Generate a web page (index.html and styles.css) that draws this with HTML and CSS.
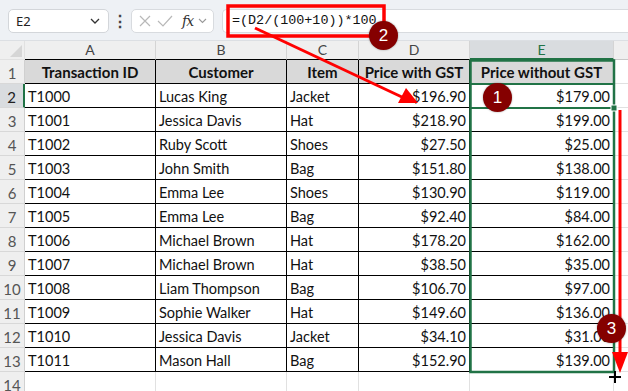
FILE: index.html
```html
<!DOCTYPE html>
<html>
<head>
<meta charset="utf-8">
<link rel="stylesheet" href="styles.css">
</head>
<body>
<div class="page">
  <div class="toolbar">
    <div class="namebox"><span class="nb-text">E2</span>
      <svg class="chev" width="10" height="6" viewBox="0 0 10 6"><path d="M1 1 L5 5 L9 1" fill="none" stroke="#333" stroke-width="1.3"/></svg>
    </div>
    <div class="dots">⋮</div>
    <div class="fxbox">
      <svg width="14" height="14" viewBox="0 0 14 14"><path d="M2 2 L12 12 M12 2 L2 12" stroke="#b8b8b8" stroke-width="1.2" fill="none"/></svg>
      <svg width="16" height="14" viewBox="0 0 16 14"><path d="M1 7 L6 12 L15 2" stroke="#b8b8b8" stroke-width="1.2" fill="none"/></svg>
      <span class="fx">fx</span>
      <svg width="9" height="6" viewBox="0 0 9 6"><path d="M1 1 L4.5 4.5 L8 1" fill="none" stroke="#999" stroke-width="1.1"/></svg>
    </div>
    <div class="formula">=(D2/(100+10))*100</div>
  </div>
  <div class="sheet">
    <div class="corner"><svg width="14" height="14" viewBox="0 0 14 14"><path d="M14 2 L14 14 L2 14 Z" fill="#d6d6d6"/></svg></div>
    <div class="ch">A</div><div class="ch">B</div><div class="ch">C</div><div class="ch">D</div><div class="ch sel">E</div><div class="ch blank"></div>

    <div class="rh">1</div><div class="hd">Transaction ID</div><div class="hd">Customer</div><div class="hd">Item</div><div class="hd">Price with GST</div><div class="hd">Price without GST</div><div class="ec"></div>

    <div class="rh act">2</div><div class="c">T1000</div><div class="c">Lucas King</div><div class="c">Jacket</div><div class="c n">$196.90</div><div class="c n">$179.00</div><div class="ec"></div>
    <div class="rh">3</div><div class="c">T1001</div><div class="c">Jessica Davis</div><div class="c">Hat</div><div class="c n">$218.90</div><div class="c n">$199.00</div><div class="ec"></div>
    <div class="rh">4</div><div class="c">T1002</div><div class="c">Ruby Scott</div><div class="c">Shoes</div><div class="c n">$27.50</div><div class="c n">$25.00</div><div class="ec"></div>
    <div class="rh">5</div><div class="c">T1003</div><div class="c">John Smith</div><div class="c">Bag</div><div class="c n">$151.80</div><div class="c n">$138.00</div><div class="ec"></div>
    <div class="rh">6</div><div class="c">T1004</div><div class="c">Emma Lee</div><div class="c">Shoes</div><div class="c n">$130.90</div><div class="c n">$119.00</div><div class="ec"></div>
    <div class="rh">7</div><div class="c">T1005</div><div class="c">Emma Lee</div><div class="c">Bag</div><div class="c n">$92.40</div><div class="c n">$84.00</div><div class="ec"></div>
    <div class="rh">8</div><div class="c">T1006</div><div class="c">Michael Brown</div><div class="c">Hat</div><div class="c n">$178.20</div><div class="c n">$162.00</div><div class="ec"></div>
    <div class="rh">9</div><div class="c">T1007</div><div class="c">Michael Brown</div><div class="c">Hat</div><div class="c n">$38.50</div><div class="c n">$35.00</div><div class="ec"></div>
    <div class="rh">10</div><div class="c">T1008</div><div class="c">Liam Thompson</div><div class="c">Bag</div><div class="c n">$106.70</div><div class="c n">$97.00</div><div class="ec"></div>
    <div class="rh">11</div><div class="c">T1009</div><div class="c">Sophie Walker</div><div class="c">Hat</div><div class="c n">$149.60</div><div class="c n">$136.00</div><div class="ec"></div>
    <div class="rh">12</div><div class="c">T1010</div><div class="c">Jessica Davis</div><div class="c">Jacket</div><div class="c n">$34.10</div><div class="c n">$31.00</div><div class="ec"></div>
    <div class="rh">13</div><div class="c">T1011</div><div class="c">Mason Hall</div><div class="c">Bag</div><div class="c n">$152.90</div><div class="c n">$139.00</div><div class="ec"></div>
    <div class="rh">14</div><div class="e"></div><div class="e"></div><div class="e"></div><div class="e"></div><div class="e"></div><div class="ec"></div>
  </div>

  <svg class="overlay" width="628" height="391" viewBox="0 0 628 391">
    <rect x="228" y="6" width="156" height="30" fill="none" stroke="#ff0000" stroke-width="3.5"/>
    <rect x="470.5" y="60.5" width="143.5" height="311.5" fill="none" stroke="#217346" stroke-width="2.5"/>
    <line x1="470" y1="84" x2="614" y2="84" stroke="#217346" stroke-width="2"/>
    <line x1="470" y1="108" x2="614" y2="108" stroke="#217346" stroke-width="2"/>
    <rect x="611" y="105" width="6" height="6" fill="#217346" stroke="#fff" stroke-width="1"/>
    <line x1="255" y1="28" x2="404" y2="98" stroke="#ff0000" stroke-width="3"/>
    <path d="M418 103 L398 103 L406 88 Z" fill="#ff0000"/>
    <line x1="620" y1="110" x2="620" y2="356" stroke="#ff0000" stroke-width="3"/>
    <path d="M612 352 L628 352 L620 373 Z" fill="#ff0000"/>
    <path d="M609 377 L621 377 M615 371 L615 383" stroke="#000" stroke-width="2"/>
  </svg>
  <div class="badge b1">1</div>
  <div class="badge b2">2</div>
  <div class="badge b3">3</div>
</div>
</body>
</html>
```

FILE: styles.css
```css
* { box-sizing: border-box; }
html, body { margin: 0; padding: 0; background: #fff; }
.page { position: relative; width: 628px; height: 391px; overflow: hidden; font-family: Lato, "Liberation Sans", sans-serif; }
.toolbar { height: 41px; background: #eef1f5; display: flex; align-items: flex-start; padding-top: 9px; padding-left: 8px; border-bottom: 1px solid #dcdfe3; }
.namebox { width: 101px; height: 24px; background: #fff; border: 1px solid #d3d6da; border-radius: 5px; display: flex; align-items: center; justify-content: space-between; padding: 0 8px 0 7px; font-family: "Noto Sans", sans-serif; font-size: 13px; color: #222; }
.dots { width: 22px; text-align: center; font-size: 16px; line-height: 24px; color: #444; font-weight: bold; }
.fxbox { width: 83px; height: 24px; background: #fff; border: 1px solid #d8dbdf; border-radius: 5px; display: flex; align-items: center; gap: 5px; padding-left: 6px; }
.fx { font-family: "DejaVu Serif", serif; font-style: italic; font-size: 14px; color: #333; margin-left: 4px; letter-spacing: -1px; }
.formula { margin-left: 8px; flex: 1; height: 24px; background: #fff; border: 1px solid #d8dbdf; border-right: none; border-radius: 5px 0 0 5px; font-family: "Liberation Mono", monospace; font-size: 13.4px; line-height: 22px; padding-left: 9px; color: #111; }
.sheet { display: grid; grid-template-columns: 25px 131px 131px 72px 111px 144px 14px; grid-template-rows: 19px repeat(14, 24px); }
.sheet > div { border-right: 1px solid #e1e1e1; border-bottom: 1px solid #e1e1e1; overflow: hidden; white-space: nowrap; }
.corner { background: #efefef; display: flex; align-items: flex-end; justify-content: flex-end; padding: 0 2px 2px 0; }
.sheet > .ch { background: #efefef; border-right: 1px solid #d4d4d4; border-bottom: 1px solid #000; text-align: center; font-size: 14px; line-height: 18px; color: #444; }
.sheet > .ch.sel { background: #d9dcdf; color: #217346; border-bottom: 2px solid #217346; }
.sheet > .ch.blank { border-bottom: 1px solid #c8c8c8; border-right: none; }
.sheet > .rh { background: #efefef; border-right: 1px solid #d0d0d0; border-bottom: 1px solid #d8d8d8; text-align: center; font-size: 15px; line-height: 26px; color: #555; }
.sheet > .rh.act { background: #d9dcdf; border-right: 2px solid #217346; color: #222; }
.sheet > .hd { background: #d9d9d9; border-right: 1px solid #000; border-bottom: 1px solid #000; text-align: center; font-weight: bold; font-size: 15px; line-height: 25px; color: #111; }
.sheet > .c { border-right: 1px solid #000; border-bottom: 1px solid #000; font-size: 14.5px; line-height: 26px; padding: 0 3px; color: #111; }
.sheet > .c.n { text-align: right; }
.sheet > .ec { border-right: none; }
.overlay { position: absolute; left: 0; top: 0; pointer-events: none; }
.badge { position: absolute; width: 29px; height: 29px; border-radius: 50%; background: #850000; color: #fff; font-family: "Liberation Sans", sans-serif; font-size: 17px; line-height: 29px; text-align: center; box-shadow: 0 0 2px rgba(0,0,0,0.4); }
.b1 { left: 483px; top: 83px; }
.b2 { left: 369px; top: 21px; }
.b3 { left: 597px; top: 314px; }
```
